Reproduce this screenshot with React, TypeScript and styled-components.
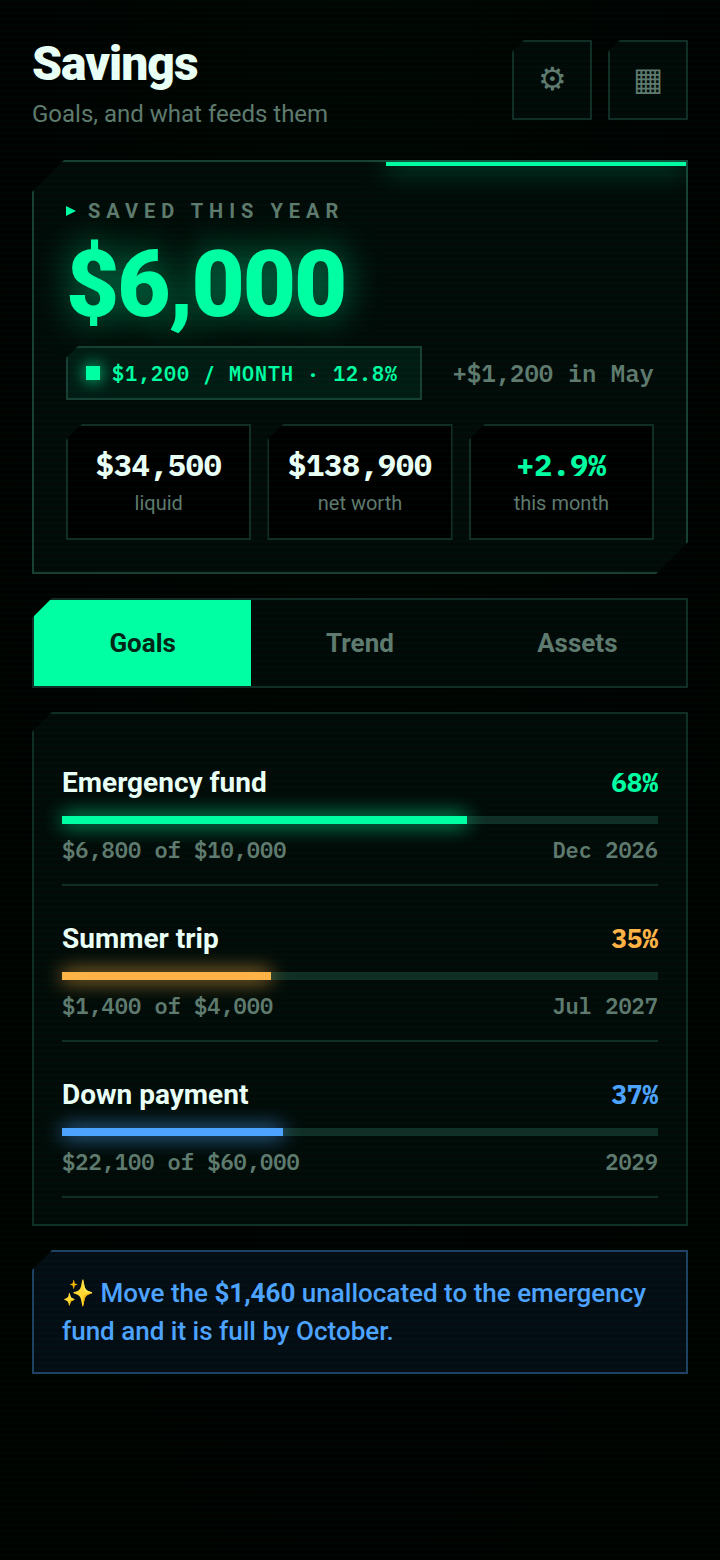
import React from "react";
import styled, { createGlobalStyle } from "styled-components";

const sans = `Roboto, "Liberation Sans", sans-serif`;
const mono = `"IBM Plex Mono", "Liberation Mono", monospace`;
const mint = "#00ffa3";
const amber = "#ffb347";
const blue = "#4da3ff";
const muted = "#5f7a6e";
const bright = "#eafff5";
const line = "#102e25";
const lineStrong = "#174034";

const cut = (n: number) => `polygon(${n}px 0, 100% 0, 100% 100%, 0 100%, 0 ${n}px)`;

const GlobalStyle = createGlobalStyle`
  *, *::before, *::after { box-sizing: border-box; }
  html { min-height: 100%; background: #000; }
  body {
    margin: 0;
    min-height: 100vh;
    background: radial-gradient(ellipse at 50% 0, #000703 0%, #000301 60%, #000401 100%);
    font-family: ${sans};
    color: ${bright};
  }
  body::after {
    content: "";
    position: fixed;
    inset: 0;
    pointer-events: none;
    background: repeating-linear-gradient(180deg, rgba(0, 255, 163, 0.016) 0 2px, transparent 2px 6px);
  }
  button { font: inherit; color: inherit; cursor: pointer; }
  h1, h2, p { margin: 0; }
`;

const Page = styled.main`
  display: flex;
  flex-direction: column;
  gap: 24px;
  padding: 40px 32px;
`;

const Header = styled.header`
  display: flex;
  justify-content: space-between;
  align-items: flex-start;
  padding-bottom: 8px;
`;

const Title = styled.h1`
  font-size: 48px;
  line-height: 48px;
  font-weight: 900;
  letter-spacing: -1px;
`;

const Subtitle = styled.p`
  margin-top: 12px;
  font-size: 24px;
  line-height: 28px;
  color: ${muted};
`;

const Actions = styled.div`
  display: flex;
  gap: 16px;
`;

const IconButton = styled.button`
  display: grid;
  place-items: center;
  width: 80px;
  height: 80px;
  padding: 0 0 2px;
  border: 2px solid ${line};
  background: #020a08;
  color: ${muted};
  font-size: 32px;
  line-height: 40px;
  clip-path: ${cut(12)};
`;

const Hero = styled.section`
  position: relative;
  display: flex;
  flex-direction: column;
  padding: 32px;
  border: 2px solid ${lineStrong};
  background: #020b08;
  clip-path: polygon(32px 0, 100% 0, 100% calc(100% - 32px), calc(100% - 32px) 100%, 0 100%, 0 32px);

  &::before {
    content: "";
    position: absolute;
    top: 0;
    right: 0;
    width: 46%;
    height: 4px;
    background: ${mint};
    box-shadow: 0 0 28px ${mint};
  }
`;

const Eyebrow = styled.h2`
  display: flex;
  align-items: center;
  gap: 12px;
  font-size: 20px;
  line-height: 34px;
  font-weight: 700;
  letter-spacing: 6px;
  text-transform: uppercase;
  color: ${muted};
`;

const Pointer = styled.span`
  width: 10px;
  height: 10px;
  background: ${mint};
  clip-path: polygon(0 0, 100% 50%, 0 100%);
`;

const Amount = styled.p`
  margin-top: 10px;
  font-size: 92px;
  line-height: 94px;
  font-weight: 900;
  letter-spacing: -2px;
  color: ${mint};
  text-shadow: 0 0 36px rgba(0, 255, 163, 0.5);
`;

const PaceRow = styled.div`
  display: flex;
  justify-content: space-between;
  align-items: center;
  margin-top: 14px;
`;

const Chip = styled.span`
  display: flex;
  align-items: center;
  gap: 12px;
  height: 54px;
  padding: 0 22px 0 18px;
  border: 2px solid ${lineStrong};
  background: #021c14;
  color: ${mint};
  font-family: ${mono};
  font-size: 20px;
  font-weight: 600;
  letter-spacing: 1px;
  clip-path: ${cut(12)};
`;

const Dot = styled.span`
  width: 14px;
  height: 14px;
  background: ${mint};
  box-shadow: 0 0 16px ${mint};
`;

const Delta = styled.span`
  font-family: ${mono};
  font-size: 24px;
  font-weight: 600;
  color: ${muted};
`;

const Stats = styled.div`
  display: grid;
  grid-template-columns: repeat(3, 1fr);
  gap: 16px;
  margin-top: 24px;
`;

const Stat = styled.div`
  display: flex;
  flex-direction: column;
  align-items: center;
  gap: 6px;
  padding: 20px 0 22px;
  border: 2px solid ${line};
  background: #000;
  clip-path: ${cut(16)};
`;

const StatValue = styled.strong<{ $tone?: string }>`
  font-family: ${mono};
  font-size: 30px;
  line-height: 38px;
  font-weight: 700;
  color: ${(p) => p.$tone ?? bright};
`;

const StatLabel = styled.span`
  font-size: 20px;
  line-height: 26px;
  color: ${muted};
`;

const Tabs = styled.nav`
  display: grid;
  grid-template-columns: repeat(3, 1fr);
  border: 2px solid ${line};
  background: #020a08;
  clip-path: ${cut(20)};
`;

const Tab = styled.button<{ $active?: boolean }>`
  height: 86px;
  padding: 0;
  border: 0;
  background: ${(p) => (p.$active ? mint : "transparent")};
  color: ${(p) => (p.$active ? "#002415" : muted)};
  font-size: 26px;
  font-weight: 700;
`;

const Goals = styled.section`
  padding: 16px 28px 26px;
  border: 2px solid ${line};
  background: #020b08;
  clip-path: ${cut(20)};
`;

const Goal = styled.article`
  padding: 32px 0 18px;
  border-bottom: 2px solid ${line};
`;

const Split = styled.div`
  display: flex;
  justify-content: space-between;
  align-items: baseline;
`;

const GoalName = styled.h2`
  font-size: 28px;
  line-height: 42px;
  font-weight: 700;
`;

const Percent = styled.strong<{ $tone: string }>`
  font-family: ${mono};
  font-size: 26px;
  font-weight: 700;
  color: ${(p) => p.$tone};
`;

const Track = styled.div`
  height: 8px;
  margin: 12px 0 10px;
  background: ${line};
`;

const Fill = styled.div<{ $tone: string }>`
  height: 100%;
  background: ${(p) => p.$tone};
  box-shadow: 0 0 20px ${(p) => p.$tone};
`;

const Detail = styled.span`
  font-family: ${mono};
  font-size: 22px;
  line-height: 32px;
  font-weight: 600;
  color: ${muted};
`;

const Tip = styled.p`
  padding: 22px 28px;
  border: 2px solid #1d4262;
  background: #040d13;
  color: ${blue};
  font-size: 26px;
  line-height: 38px;
  font-weight: 500;
  clip-path: ${cut(20)};
`;

const goals = [
  { name: "Emergency fund", percent: 68, saved: "$6,800 of $10,000", due: "Dec 2026", tone: mint },
  { name: "Summer trip", percent: 35, saved: "$1,400 of $4,000", due: "Jul 2027", tone: amber },
  { name: "Down payment", percent: 37, saved: "$22,100 of $60,000", due: "2029", tone: blue },
];

export default function App() {
  return (
    <>
      <GlobalStyle />
      <Page>
        <Header>
          <div>
            <Title>Savings</Title>
            <Subtitle>Goals, and what feeds them</Subtitle>
          </div>
          <Actions>
            <IconButton aria-label="Settings">⚙</IconButton>
            <IconButton aria-label="Overview">▦</IconButton>
          </Actions>
        </Header>
        <Hero>
          <Eyebrow><Pointer />Saved this year</Eyebrow>
          <Amount>$6,000</Amount>
          <PaceRow>
            <Chip><Dot />$1,200 / MONTH · 12.8%</Chip>
            <Delta>+$1,200 in May</Delta>
          </PaceRow>
          <Stats>
            <Stat><StatValue>$34,500</StatValue><StatLabel>liquid</StatLabel></Stat>
            <Stat><StatValue>$138,900</StatValue><StatLabel>net worth</StatLabel></Stat>
            <Stat><StatValue $tone={mint}>+2.9%</StatValue><StatLabel>this month</StatLabel></Stat>
          </Stats>
        </Hero>
        <Tabs>
          <Tab $active aria-current="page">Goals</Tab>
          <Tab>Trend</Tab>
          <Tab>Assets</Tab>
        </Tabs>
        <Goals>
          {goals.map((g) => (
            <Goal key={g.name}>
              <Split>
                <GoalName>{g.name}</GoalName>
                <Percent $tone={g.tone}>{g.percent}%</Percent>
              </Split>
              <Track><Fill $tone={g.tone} style={{ width: `${g.percent}%` }} /></Track>
              <Split>
                <Detail>{g.saved}</Detail>
                <Detail>{g.due}</Detail>
              </Split>
            </Goal>
          ))}
        </Goals>
        <Tip>✨ Move the <b>$1,460</b> unallocated to the emergency fund and it is full by October.</Tip>
      </Page>
    </>
  );
}
